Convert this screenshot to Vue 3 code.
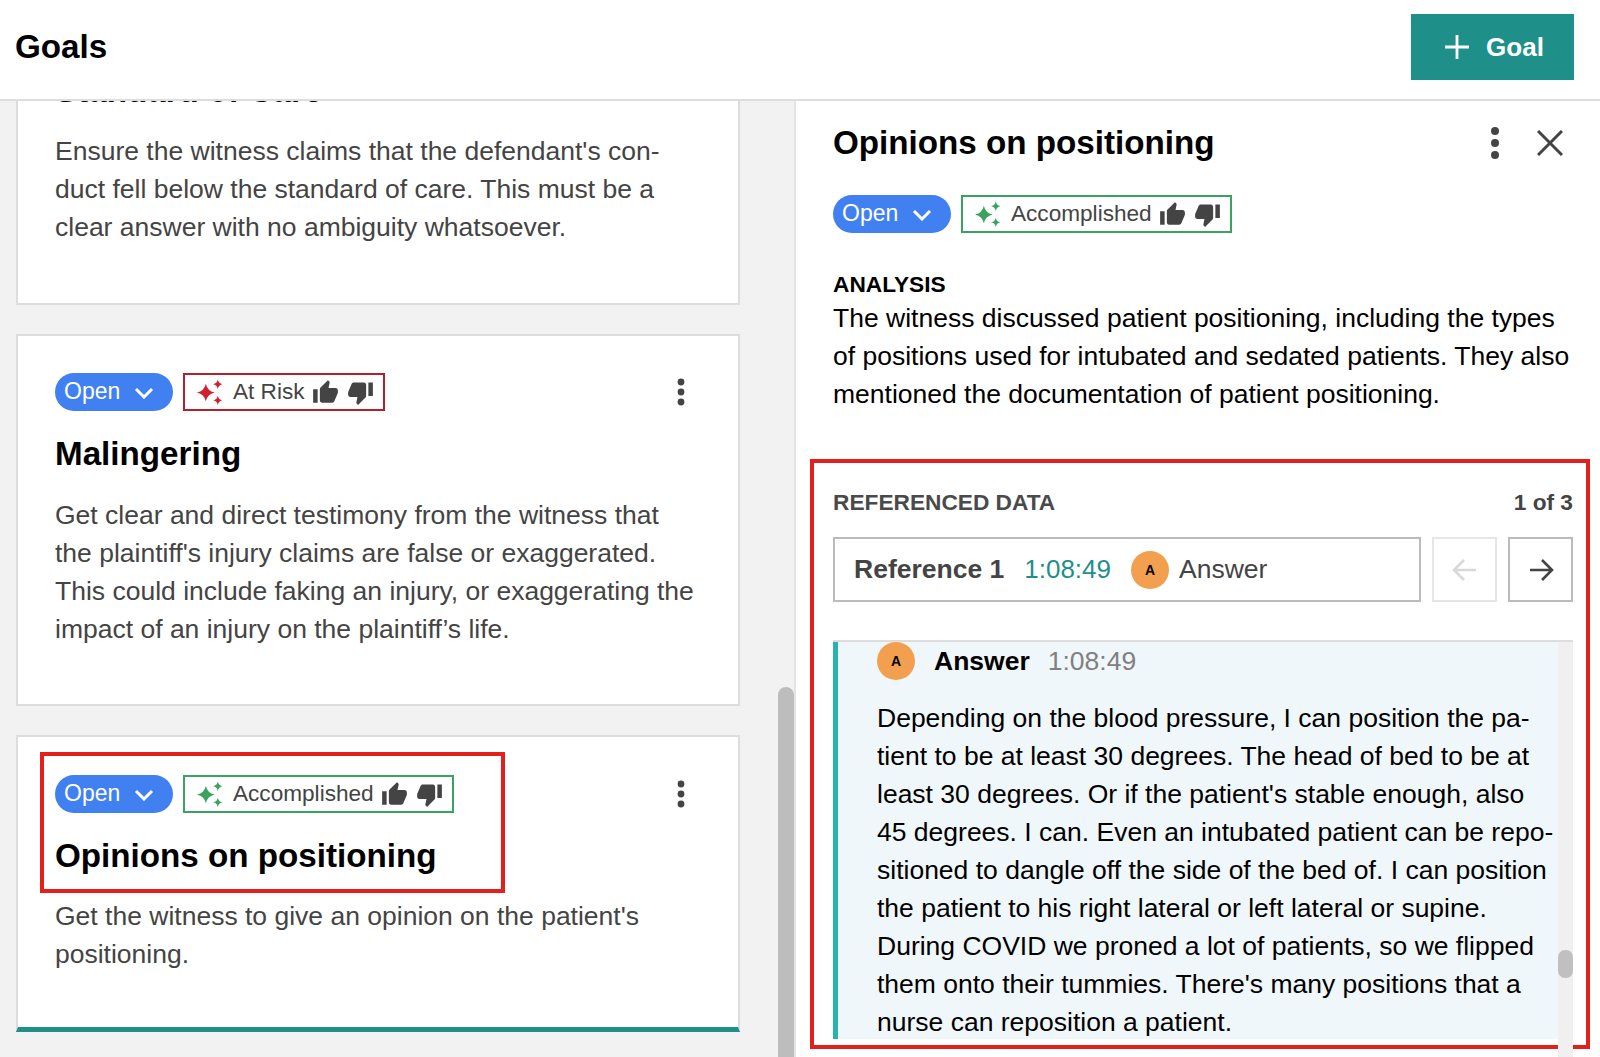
<script setup>
const goals = [
  {
    title: 'Standard of Care',
    status: 'Accomplished',
    lines: [
      "Ensure the witness claims that the defendant's con-",
      'duct fell below the standard of care. This must be a',
      'clear answer with no ambiguity whatsoever.'
    ]
  },
  {
    title: 'Malingering',
    status: 'At Risk',
    lines: [
      'Get clear and direct testimony from the witness that',
      "the plaintiff's injury claims are false or exaggerated.",
      'This could include faking an injury, or exaggerating the',
      'impact of an injury on the plaintiff’s life.'
    ]
  },
  {
    title: 'Opinions on positioning',
    status: 'Accomplished',
    active: true,
    lines: ["Get the witness to give an opinion on the patient's", 'positioning.']
  }
]

const analysis = [
  'The witness discussed patient positioning, including the types',
  'of positions used for intubated and sedated patients. They also',
  'mentioned the documentation of patient positioning.'
]

const transcript = [
  'Depending on the blood pressure, I can position the pa-',
  'tient to be at least 30 degrees. The head of bed to be at',
  "least 30 degrees. Or if the patient's stable enough, also",
  '45 degrees. I can. Even an intubated patient can be repo-',
  'sitioned to dangle off the side of the bed of. I can position',
  'the patient to his right lateral or left lateral or supine.',
  'During COVID we proned a lot of patients, so we flipped',
  "them onto their tummies. There's many positions that a",
  'nurse can reposition a patient.'
]

const thumbUp = 'M1 21h4V9H1v12zm22-11c0-1.1-.9-2-2-2h-6.31l.95-4.57.03-.32c0-.41-.17-.79-.44-1.06L14.17 1 7.59 7.59C7.22 7.95 7 8.45 7 9v10c0 1.1.9 2 2 2h9c.83 0 1.54-.5 1.84-1.22l3.02-7.05c.09-.23.14-.47.14-.73v-2z'
const thumbDown = 'M15 3H6c-.83 0-1.54.5-1.84 1.22l-3.02 7.05c-.09.23-.14.47-.14.73v2c0 1.1.9 2 2 2h6.31l-.95 4.57-.03.32c0 .41.17.79.44 1.06L9.83 23l6.59-6.59c.36-.36.58-.86.58-1.41V5c0-1.1-.9-2-2-2zm4 0v12h4V3h-4z'
const sparkle = 'M8.5 4.5Q10 11.5 17 13Q10 14.5 8.5 21.5Q7 14.5 0 13Q7 11.5 8.5 4.5ZM20 .5Q20.7 4.3 24.5 5Q20.7 5.7 20 9.5Q19.3 5.7 15.5 5Q19.3 4.3 20 .5ZM20 16Q20.7 19.8 24.5 20.5Q20.7 21.2 20 25Q19.3 21.2 15.5 20.5Q19.3 19.8 20 16Z'
</script>

<template>
  <div class="page">
    <header class="topbar">
      <h1 class="page-title">Goals</h1>
      <button class="add-goal">
        <svg class="plus" viewBox="0 0 24 24"><path d="M12 0v24M0 12h24" /></svg>
        Goal
      </button>
    </header>

    <div class="main">
      <section class="goal-col">
        <div class="goal-list">
          <article v-for="g in goals" :key="g.title" class="goal-card" :class="{ active: g.active }">
            <div class="card-head">
              <div class="status-row">
                <span class="pill">Open
                  <svg class="chev" viewBox="0 0 20 12"><path d="M2 2l8 8 8-8" /></svg>
                </span>
                <span class="badge" :class="g.status === 'At Risk' ? 'risk' : 'done'">
                  <svg class="spark" viewBox="0 0 25 25"><path :d="sparkle" /></svg>
                  <span class="badge-text">{{ g.status }}</span>
                  <svg class="thumb" viewBox="0 0 24 24"><path :d="thumbUp" /></svg>
                  <svg class="thumb" viewBox="0 0 24 24"><path :d="thumbDown" /></svg>
                </span>
              </div>
              <svg class="kebab" viewBox="0 0 8 28"><circle cx="4" cy="4" r="3.4" /><circle cx="4" cy="14" r="3.4" /><circle cx="4" cy="24" r="3.4" /></svg>
            </div>
            <h2 class="goal-title">{{ g.title }}</h2>
            <p class="goal-desc">
              <span v-for="l in g.lines" :key="l" class="line">{{ l }}</span>
            </p>
            <div v-if="g.active" class="annot annot-card"></div>
          </article>
        </div>
        <div class="col-thumb"></div>
      </section>

      <aside class="detail">
        <div class="detail-head">
          <h2 class="detail-title">Opinions on positioning</h2>
          <div class="detail-actions">
            <svg class="kebab big" viewBox="0 0 8 32"><circle cx="4" cy="4" r="4" /><circle cx="4" cy="16" r="4" /><circle cx="4" cy="28" r="4" /></svg>
            <svg class="close" viewBox="0 0 26 26"><path d="M1 1l24 24M25 1L1 25" /></svg>
          </div>
        </div>

        <div class="status-row detail-status">
          <span class="pill">Open
            <svg class="chev" viewBox="0 0 20 12"><path d="M2 2l8 8 8-8" /></svg>
          </span>
          <span class="badge done">
            <svg class="spark" viewBox="0 0 25 25"><path :d="sparkle" /></svg>
            <span class="badge-text">Accomplished</span>
            <svg class="thumb" viewBox="0 0 24 24"><path :d="thumbUp" /></svg>
            <svg class="thumb" viewBox="0 0 24 24"><path :d="thumbDown" /></svg>
          </span>
        </div>

        <h3 class="analysis-label">ANALYSIS</h3>
        <p class="analysis">
          <span v-for="l in analysis" :key="l" class="line">{{ l }}</span>
        </p>

        <section class="refs">
          <div class="annot annot-refs"></div>
          <div class="refs-head">
            <span class="refs-label">REFERENCED DATA</span>
            <span class="refs-count">1 of 3</span>
          </div>
          <div class="ref-nav">
            <div class="ref-box">
              <b class="ref-name">Reference 1</b>
              <span class="ref-time">1:08:49</span>
              <span class="avatar">A</span>
              <span class="ref-speaker">Answer</span>
            </div>
            <button class="nav-btn off">
              <svg viewBox="0 0 26 26"><path d="M24 13H2M12 3L2 13l10 10" /></svg>
            </button>
            <button class="nav-btn">
              <svg viewBox="0 0 26 26"><path d="M2 13h22M14 3l10 10-10 10" /></svg>
            </button>
          </div>
          <div class="transcript">
            <div class="transcript-body">
              <div class="speaker-row">
                <span class="avatar">A</span>
                <b class="speaker">Answer</b>
                <span class="speaker-time">1:08:49</span>
              </div>
              <p class="speech">
                <span v-for="l in transcript" :key="l" class="line">{{ l }}</span>
              </p>
            </div>
            <div class="track"><div class="track-thumb"></div></div>
          </div>
        </section>
      </aside>
    </div>
  </div>
</template>

<style>
html,
body {
  margin: 0;
  background: #fff;
}
</style>

<style scoped>
.page {
  width: 1600px;
  height: 1057px;
  display: flex;
  flex-direction: column;
  overflow: hidden;
  font-family: "Liberation Sans", Arial, sans-serif;
  color: #000;
}

.line {
  display: block;
  white-space: nowrap;
}

.topbar {
  height: 101px;
  flex: none;
  display: flex;
  align-items: flex-start;
  justify-content: space-between;
  padding: 14px 26px 0 15px;
  box-sizing: border-box;
  border-bottom: 2px solid #ddd;
  background: #fff;
  position: relative;
  z-index: 2;
}

.page-title {
  margin: 13px 0 0;
  font-size: 33.2px;
  line-height: 40px;
  font-weight: 700;
}

.add-goal {
  width: 163px;
  height: 66px;
  border: 0;
  background: #1f8f8a;
  color: #fff;
  font: 700 26px "Liberation Sans", Arial, sans-serif;
  display: flex;
  align-items: center;
  justify-content: center;
  gap: 17px;
  padding: 0 0 0 4px;
}

.plus {
  width: 24px;
  height: 24px;
  fill: none;
  stroke: #fff;
  stroke-width: 2.8;
}

.main {
  flex: 1;
  display: flex;
  min-height: 0;
}

.goal-col {
  width: 796px;
  flex: none;
  background: #f2f2f2;
  position: relative;
  overflow: hidden;
  border-right: 2px solid #e4e4e4;
  box-sizing: border-box;
}

.goal-list {
  width: 724px;
  margin: -130px 0 0 16px;
  display: flex;
  flex-direction: column;
  gap: 29px;
}

.goal-card {
  position: relative;
  background: #fff;
  border: 2px solid #ddd;
  box-sizing: border-box;
  padding: 37px 37px 56px 37px;
}

.goal-card:first-child {
  padding-bottom: 57px;
}

.goal-card:first-child .goal-title {
  margin-top: 23px;
}

.goal-card:first-child .goal-desc {
  margin-top: 21px;
}

.goal-card.active {
  border-bottom: 5px solid #1f8f8a;
  padding-top: 38px;
  padding-bottom: 54px;
}

.goal-card.active .goal-desc {
  margin-top: 21px;
}

.card-head {
  display: flex;
  align-items: center;
  justify-content: space-between;
  padding-right: 16px;
}

.status-row {
  display: flex;
  align-items: center;
  gap: 10px;
}

.pill {
  height: 38px;
  width: 118px;
  box-sizing: border-box;
  padding: 0 0 2px 9px;
  border-radius: 19px;
  background: #4080f0;
  color: #fff;
  font-size: 23px;
  display: flex;
  align-items: center;
  gap: 14px;
}

.chev {
  width: 20px;
  height: 12px;
  fill: none;
  stroke: #fff;
  stroke-width: 3;
  margin-top: 3px;
}

.badge {
  height: 38px;
  box-sizing: border-box;
  border: 2px solid;
  display: flex;
  align-items: center;
  padding: 0 9px 0 12px;
  font-size: 22.6px;
  color: #444;
}

.badge.done {
  border-color: #3aa35f;
}

.badge.risk {
  border-color: #b3202c;
}

.spark {
  width: 26px;
  height: 26px;
  margin-right: 10px;
}

.done .spark {
  fill: #3aa35f;
}

.risk .spark {
  fill: #d0202f;
}

.badge-text {
  margin-right: 7px;
}

.thumb {
  width: 27px;
  height: 27px;
  fill: #444;
  margin-right: 8px;
}

.thumb:last-child {
  margin-right: 0;
}

.kebab {
  width: 8px;
  height: 28px;
  fill: #444;
}

.kebab.big {
  height: 32px;
}

.goal-title {
  margin: 23px 0 0;
  font-size: 33.2px;
  line-height: 40px;
  font-weight: 700;
}

.goal-desc {
  margin: 22px 0 0;
  font-size: 26.5px;
  line-height: 38px;
  color: #444;
}

.annot {
  position: absolute;
  border: 4px solid #e3201b;
  pointer-events: none;
  box-sizing: border-box;
}

.annot-card {
  left: 22px;
  top: 15px;
  width: 465px;
  height: 141px;
}

.annot-refs {
  left: -23px;
  top: -30px;
  right: -17px;
  height: 590px;
}

.col-thumb {
  position: absolute;
  right: 0;
  top: 586px;
  bottom: 0;
  width: 16px;
  background: #bdbdbd;
  border-radius: 8px 8px 0 0;
}

.detail {
  flex: 1;
  min-width: 0;
  box-sizing: border-box;
  padding: 23px 27px 0 37px;
  overflow: hidden;
}

.detail-head {
  display: flex;
  align-items: center;
  justify-content: space-between;
}

.detail-title {
  margin: 0;
  font-size: 33.2px;
  line-height: 38px;
  font-weight: 700;
}

.detail-actions {
  display: flex;
  align-items: center;
  gap: 38px;
  padding-right: 10px;
}

.close {
  width: 26px;
  height: 26px;
  fill: none;
  stroke: #444;
  stroke-width: 3;
}

.detail-status {
  margin-top: 33px;
}

.analysis-label {
  margin: 38px 0 0;
  font-size: 22.7px;
  line-height: 26px;
  font-weight: 700;
}

.analysis {
  margin: 2px 0 0;
  font-size: 26.5px;
  line-height: 38px;
}

.refs {
  position: relative;
  margin-top: 76px;
}

.refs-head {
  display: flex;
  justify-content: space-between;
  align-items: center;
  font-size: 22.7px;
  line-height: 26px;
  font-weight: 700;
}

.refs-label {
  color: #4a4a4a;
}

.refs-count {
  color: #444;
}

.ref-nav {
  margin-top: 22px;
  display: flex;
  gap: 11px;
}

.ref-box {
  flex: 1;
  height: 65px;
  box-sizing: border-box;
  border: 2px solid #bbb;
  display: flex;
  align-items: center;
  padding-left: 19px;
  font-size: 26.5px;
  color: #444;
}

.ref-name {
  margin-right: 20px;
}

.ref-time {
  color: #1f8f8a;
  font-size: 26px;
  margin-right: 20px;
}

.ref-speaker {
  margin-left: 10px;
}

.avatar {
  width: 38px;
  height: 38px;
  flex: none;
  border-radius: 50%;
  background: #f2a04f;
  color: #000;
  font-size: 14px;
  font-weight: 700;
  display: flex;
  align-items: center;
  justify-content: center;
}

.nav-btn {
  width: 65px;
  height: 65px;
  padding: 0;
  background: #fff;
  border: 2px solid #bbb;
  display: flex;
  align-items: center;
  justify-content: center;
}

.nav-btn svg {
  width: 26px;
  height: 26px;
  fill: none;
  stroke: #444;
  stroke-width: 2.6;
}

.nav-btn.off {
  border-color: #e6e6e6;
}

.nav-btn.off svg {
  stroke: #d8d8d8;
}

.transcript {
  margin-top: 38px;
  height: 416px;
  border-top: 2px solid #ddd;
  display: flex;
  align-items: flex-start;
}

.transcript-body {
  flex: 1;
  height: 397px;
  box-sizing: border-box;
  background: #f0f7fa;
  border-left: 5px solid #2ab3ad;
  padding-left: 39px;
  overflow: hidden;
}

.speaker-row {
  display: flex;
  align-items: center;
  height: 38px;
}

.speaker {
  margin-left: 19px;
  font-size: 26.5px;
}

.speaker-time {
  margin-left: 18px;
  font-size: 26.5px;
  color: #808080;
}

.speech {
  margin: 19px 0 0;
  font-size: 26.5px;
  line-height: 38px;
}

.track {
  width: 15px;
  height: 100%;
  flex: none;
  background: #f0f0f0;
  position: relative;
}

.track-thumb {
  position: absolute;
  top: 308px;
  left: 0;
  width: 15px;
  height: 28px;
  border-radius: 7px;
  background: #c0c0c0;
}
</style>
